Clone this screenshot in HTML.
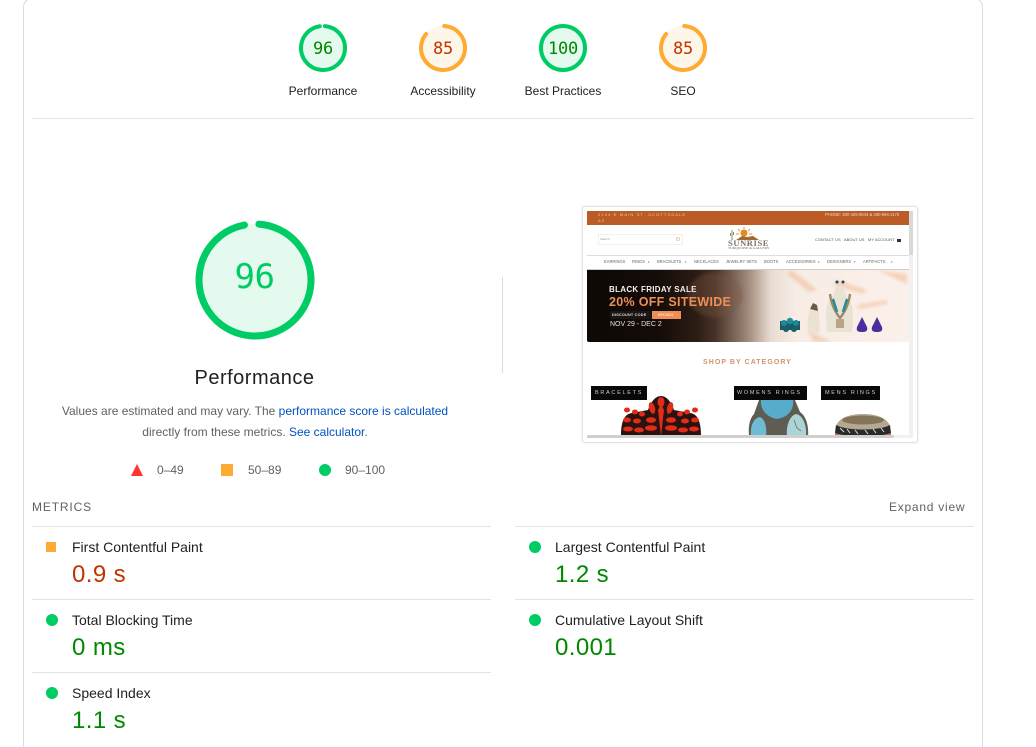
<!DOCTYPE html>
<html><head><meta charset="utf-8"><style>
html,body{margin:0;padding:0;background:#fff;width:1036px;height:747px;overflow:hidden}
body{position:relative;font-family:"Liberation Sans",Arial,sans-serif}
.a{position:absolute;white-space:nowrap}
.c{transform:translateX(-50%)}
.lab{font-size:12px;color:#212121;top:84px;line-height:15px}
.num{font-family:"DejaVu Sans Mono",monospace;font-size:17px;line-height:20px;top:39px;letter-spacing:-.2px}
.hr{position:absolute;height:1px;background:#e4e4e4}
.t{font-size:14px;color:#212121;line-height:16px}
.v{font-size:24px;line-height:28px;letter-spacing:.4px}
.g{color:#080}.o{color:#c33300}
.dot{position:absolute;width:12px;height:12px;border-radius:50%;background:#0c6}
.sq{position:absolute;width:10px;height:10px;background:#fa3}
.leg{font-size:12px;color:#616161;line-height:14px;top:463px}
svg{position:absolute;overflow:visible}
.n{position:absolute;top:52px;font-size:4.1px;line-height:6px;color:#666;filter:blur(.2px);white-space:nowrap}
.tl{position:absolute;top:30px;font-size:4px;line-height:6px;color:#555;filter:blur(.2px);white-space:nowrap}
.bl{position:absolute;top:180px;font-size:5.5px;line-height:12px;color:#ccc;letter-spacing:1.7px;white-space:nowrap}
</style></head><body>
<div class="a" style="left:23px;top:-2px;width:958px;height:800px;border:1px solid #dadce0;border-radius:9px"></div>

<svg style="left:299px;top:24px" width="48" height="48" viewBox="0 0 120 120"><circle cx="60" cy="60" r="56" fill="#0c6" fill-opacity=".1"/><circle cx="60" cy="60" r="55" fill="none" stroke="#0c6" stroke-width="10" stroke-linecap="round" stroke-dasharray="332 400" transform="rotate(-85 60 60)"/></svg>
<svg style="left:419px;top:24px" width="48" height="48" viewBox="0 0 120 120"><circle cx="60" cy="60" r="56" fill="#fa3" fill-opacity=".1"/><circle cx="60" cy="60" r="55" fill="none" stroke="#fa3" stroke-width="10" stroke-linecap="round" stroke-dasharray="294 400" transform="rotate(-87 60 60)"/></svg>
<svg style="left:539px;top:24px" width="48" height="48" viewBox="0 0 120 120"><circle cx="60" cy="60" r="55" fill="#0c6" fill-opacity=".1" stroke="#0c6" stroke-width="10"/></svg>
<svg style="left:659px;top:24px" width="48" height="48" viewBox="0 0 120 120"><circle cx="60" cy="60" r="56" fill="#fa3" fill-opacity=".1"/><circle cx="60" cy="60" r="55" fill="none" stroke="#fa3" stroke-width="10" stroke-linecap="round" stroke-dasharray="294 400" transform="rotate(-87 60 60)"/></svg>

<div class="a c num g" style="left:323px">96</div>
<div class="a c num o" style="left:443px">85</div>
<div class="a c num g" style="left:563px">100</div>
<div class="a c num o" style="left:683px">85</div>
<div class="a c lab" style="left:323px">Performance</div>
<div class="a c lab" style="left:443px">Accessibility</div>
<div class="a c lab" style="left:563px">Best Practices</div>
<div class="a c lab" style="left:683px">SEO</div>
<div class="hr" style="left:32px;top:118px;width:942px"></div>

<svg style="left:195px;top:220px" width="120" height="120" viewBox="0 0 120 120"><circle cx="60" cy="60" r="56" fill="#0c6" fill-opacity=".1"/><circle cx="60" cy="60" r="56" fill="none" stroke="#0c6" stroke-width="7" stroke-linecap="round" stroke-dasharray="337 400" transform="rotate(-86 60 60)"/></svg>
<div class="a c" style="left:254.5px;top:257px;font-family:'DejaVu Sans Mono',monospace;font-size:34px;line-height:40px;color:#0c6;letter-spacing:-.5px">96</div>
<div class="a c" style="left:254.5px;top:366px;font-size:20px;line-height:24px;color:#212121;letter-spacing:.5px">Performance</div>
<div class="a c" style="left:255px;top:404px;font-size:12px;line-height:15px;color:#616161">Values are estimated and may vary. The <span style="color:#0051c3">performance score is calculated</span></div>
<div class="a c" style="left:255px;top:425px;font-size:12px;line-height:15px;color:#616161">directly from these metrics. <span style="color:#0051c3">See calculator</span>.</div>

<svg style="left:131px;top:464px" width="12" height="12"><path d="M6 0L12 12H0Z" fill="#f33"/></svg>
<div class="a leg" style="left:157px">0–49</div>
<div class="a" style="left:221px;top:464px;width:12px;height:12px;background:#fa3"></div>
<div class="a leg" style="left:248px">50–89</div>
<div class="dot" style="left:319px;top:464px"></div>
<div class="a leg" style="left:345px">90–100</div>

<div style="position:absolute;left:502px;top:277px;width:1px;height:96px;background:#dcdcdc"></div>

<div style="position:absolute;left:582px;top:206px;width:334px;height:235px;border:1px solid #e2e2e2;border-radius:3px;box-shadow:0 0 2px rgba(0,0,0,.12);background:#fff;overflow:hidden">
 <div style="position:absolute;left:4px;top:4px;width:322px;height:14px;background:#bb5c26"></div>
 <div class="a" style="left:15px;top:5px;font-size:4px;line-height:5.5px;color:#e8c9b0;letter-spacing:1.15px;white-space:normal;width:90px;filter:blur(.25px)">2194 E MAIN ST, SCOTTSDALE AZ</div>
 <div class="a" style="left:242px;top:5px;font-size:4.2px;line-height:6px;color:#ecd6c4;filter:blur(.25px)">PHONE: 480-425-0644 &amp; 480-994-1170</div>
 <div style="position:absolute;left:326px;top:4px;width:4px;height:44px;background:#d8d8d8"></div>
 <div style="position:absolute;left:326px;top:48px;width:4px;height:184px;background:#f1f1f1"></div>
 <div style="position:absolute;left:15px;top:27px;width:83px;height:9px;border:1px solid #f0f0f0"></div>
 <div class="a" style="left:17px;top:29px;font-size:3px;line-height:6px;color:#999">Search</div>
 <div class="a" style="left:93px;top:30px;width:2px;height:2px;border:1px solid #f0cf90;border-radius:50%"></div>
 <svg style="left:145px;top:18px;filter:blur(.25px)" width="42" height="18"><circle cx="16" cy="8" r="3.5" fill="#e08a20"/><path d="M16 2v2M10 4l2 2M22 4l-2 2M8 9h3M21 9h3" stroke="#d07a20" stroke-width=".8"/><path d="M4 5v10M2.5 8v3M5.5 7v3" stroke="#85906a"/><path d="M8 15l6-4 5 1 6-1 6 4z" fill="#a06a30"/></svg>
 <div class="a" style="left:145px;top:32px;font-family:'Liberation Serif',serif;font-weight:700;font-size:8.5px;line-height:8px;letter-spacing:.6px;color:#7f7067;filter:blur(.25px)">SUNRISE</div>
 <div class="a" style="left:145px;top:39px;font-family:'Liberation Serif',serif;font-size:3.5px;line-height:5px;letter-spacing:.05px;color:#6d6058;filter:blur(.3px)">TURQUOISE &amp; GALLERY</div>
 <div class="tl" style="left:232px">CONTACT US</div>
 <div class="tl" style="left:261px">ABOUT US</div>
 <div class="tl" style="left:285px">MY ACCOUNT</div>
 <div class="a" style="left:314px;top:32px;width:4px;height:3px;background:#333"></div>
 <div style="position:absolute;left:4px;top:48px;width:322px;height:1px;background:#ddd"></div>
 <div class="n" style="left:21px">EARRINGS</div>
 <div class="n" style="left:49px">RINGS</div>
 <div class="n" style="left:65px;font-size:3px">▾</div>
 <div class="n" style="left:74px">BRACELETS</div>
 <div class="n" style="left:102px;font-size:3px">▾</div>
 <div class="n" style="left:111px">NECKLACES</div>
 <div class="n" style="left:143px">JEWELRY SETS</div>
 <div class="n" style="left:181px">BOOTS</div>
 <div class="n" style="left:203px">ACCESSORIES</div>
 <div class="n" style="left:235px;font-size:3px">▾</div>
 <div class="n" style="left:244px">DESIGNERS</div>
 <div class="n" style="left:271px;font-size:3px">▾</div>
 <div class="n" style="left:280px">ARTIFACTS</div>
 <div class="n" style="left:308px;font-size:3px">▾</div>
 <div style="position:absolute;left:4px;top:62px;width:322px;height:1px;background:#ccc"></div>

 <div style="position:absolute;left:4px;top:63px;width:322px;height:72px;background:linear-gradient(90deg,#0d0806 0%,#140c08 22%,#2c1c14 34%,#4a3328 40%,#a08a7c 50%,#e8dcd2 57%,#f7ede5 65%,#fbf1ea 100%);border-radius:0 0 2px 2px;overflow:hidden">
  <svg style="left:0;top:0;filter:blur(1.5px)" width="322" height="72"><ellipse cx="128" cy="25" rx="28" ry="22" fill="#7c5542" opacity=".35"/><path d="M205 0l25 20 -8 2 -22-18zM250 10l30 10 -4 4 -30-9zM270 35l30-5 0 4 -28 5zM220 60l25 12h-18zM290 0l30 14v-10z" fill="#f1b48e" opacity=".5"/></svg>
  <div class="a" style="left:22px;top:15px;font-size:8px;line-height:10px;font-weight:700;color:#f4f0ec;filter:blur(.2px);letter-spacing:.3px">BLACK FRIDAY SALE</div>
  <div class="a" style="left:22px;top:25px;font-size:12.5px;line-height:14px;font-weight:700;color:#ee8f57;filter:blur(.2px);letter-spacing:.3px">20% OFF SITEWIDE</div>
  <div class="a" style="left:23px;top:41px;height:8px;width:41px;background:#1c1613"></div>
  <div class="a" style="left:25px;top:41px;font-size:3.8px;line-height:8px;font-weight:700;color:#ddd;filter:blur(.2px);letter-spacing:.2px">DISCOUNT CODE</div>
  <div class="a" style="left:65px;top:41px;width:29px;height:8px;background:#ee8f57"></div>
  <div class="a" style="left:71px;top:41px;font-size:3.8px;line-height:8px;font-weight:700;color:#fbd9c2;filter:blur(.2px)">BFCM24</div>
  <div class="a" style="left:23px;top:50px;font-size:7px;line-height:10px;color:#e6e0da;filter:blur(.2px)">NOV 29 - DEC 2</div>
  <svg style="left:190px;top:7px;filter:blur(.35px)" width="125" height="60"><path d="M3 44h20v9H3z" fill="#1f5a60"/><circle cx="7" cy="46" r="3" fill="#1c8a96"/><circle cx="13" cy="44" r="3.2" fill="#19919e"/><circle cx="19" cy="46" r="3" fill="#1c8a96"/><circle cx="9" cy="52" r="3" fill="#17606a"/><circle cx="17" cy="52" r="3" fill="#17606a"/><path d="M31 56c-1-10 0-18 2-24 3-2 6-2 8 0 2 8 2 18 1 24z" fill="#ece2d2"/><path d="M33 32l3-6 4 2 1 6z" fill="#6a5a48"/><path d="M50 55c-1-12-2-22 1-29 3-6 6-8 7-14 1-4 8-4 9 0 1 6 4 8 7 14 3 7 2 17 1 29z" fill="#e9e3d6"/><circle cx="60" cy="5" r="1.5" fill="#245"/><circle cx="66" cy="5" r="1.5" fill="#245"/><path d="M53 17c1 9 5 18 10 24 5-6 9-15 10-24" fill="none" stroke="#9d8a68" stroke-width="2.5"/><path d="M56 22l4 13M70 22l-4 13" stroke="#2a8a98" stroke-width="2.5"/><path d="M59 42h8v9h-8z" fill="#b9a484"/><path d="M80 50l5-10 5 10c1 4-1 5-5 5s-6-1-5-5zM95 50l5-10 5 10c1 4-1 5-5 5s-6-1-5-5z" fill="#4b2e9e"/></svg>
 </div>

 <div class="a" style="left:120px;top:150px;font-size:7px;line-height:12px;font-weight:700;color:#d39270;letter-spacing:1.05px;filter:blur(.15px)">SHOP BY CATEGORY</div>
 <svg style="left:37px;top:189px;filter:blur(.3px)" width="82" height="40"><path d="M1 40C1 26 4 18 12 17L28 14C31 5 36 0 41 0s10 5 13 14L70 17c8 1 11 9 11 23z" fill="#2a1210"/><g fill="#e22c18"><path d="M41 40l-3-26 3-6 3 6z"/><ellipse cx="41" cy="6" rx="3.5" ry="5"/><ellipse cx="32" cy="12" rx="3" ry="6" transform="rotate(-15 32 12)"/><ellipse cx="50" cy="12" rx="3" ry="6" transform="rotate(15 50 12)"/><ellipse cx="31" cy="24" rx="5" ry="2.8"/><ellipse cx="51" cy="24" rx="5" ry="2.8"/><ellipse cx="31" cy="32" rx="6" ry="2.8"/><ellipse cx="51" cy="32" rx="6" ry="2.8"/><ellipse cx="7" cy="14" rx="3" ry="2.5"/><ellipse cx="15" cy="16" rx="3" ry="2.5"/><ellipse cx="22" cy="18" rx="3" ry="2.5"/><ellipse cx="60" cy="18" rx="3" ry="2.5"/><ellipse cx="67" cy="16" rx="3" ry="2.5"/><ellipse cx="75" cy="14" rx="3" ry="2.5"/><ellipse cx="7" cy="24" rx="4" ry="2.5"/><ellipse cx="17" cy="25" rx="4" ry="2.5"/><ellipse cx="65" cy="25" rx="4" ry="2.5"/><ellipse cx="75" cy="24" rx="4" ry="2.5"/><ellipse cx="8" cy="33" rx="5" ry="2.5"/><ellipse cx="19" cy="34" rx="5" ry="2.5"/><ellipse cx="63" cy="34" rx="5" ry="2.5"/><ellipse cx="74" cy="33" rx="5" ry="2.5"/></g></svg>
 <svg style="left:165px;top:193px;filter:blur(.3px)" width="62" height="36"><path d="M1 36c-1-10 1-18 5-22l5-14h36l5 12c6 4 9 14 8 24z" fill="#5f5c52"/><path d="M13 0h32c1 9-4 17-16 19C18 17 12 9 13 0z" fill="#58accb"/><path d="M3 36c-1-9 2-18 9-19 5 2 7 10 6 19z" fill="#6fbbd4"/><path d="M39 36c-1-9 2-20 9-22 7 1 11 12 10 22z" fill="#a9d5d9"/><path d="M46 20l3 8 4 3" stroke="#8a6a50" fill="none" stroke-width=".8"/></svg>
 <svg style="left:252px;top:207px;filter:blur(.3px)" width="56" height="22"><path d="M1 22V12C4 4 14 0 28 0s24 4 27 12v10z" fill="#b4a892"/><ellipse cx="28" cy="6" rx="21" ry="4.5" fill="#847559"/><path d="M1 11c10 6 44 6 54 0l1 8c-14 5-42 5-56 0z" fill="#2a2a2a"/><path d="M5 14l4 4M12 15l3 4M20 16l3 4M30 16l3 4M38 15l3 4M46 14l3 4" stroke="#ddd" stroke-width="1"/><path d="M0 19c14 5 42 5 56 0v3H0z" fill="#c06a5a"/></svg>
 <div style="position:absolute;left:8px;top:179px;width:56px;height:14px;background:#080808"></div>
 <div class="bl" style="left:12px">BRACELETS</div>
 <div style="position:absolute;left:151px;top:179px;width:73px;height:14px;background:#080808"></div>
 <div class="bl" style="left:154px">WOMENS RINGS</div>
 <div style="position:absolute;left:238px;top:179px;width:59px;height:14px;background:#080808"></div>
 <div class="bl" style="left:242px">MENS RINGS</div>
 <div style="position:absolute;left:4px;top:228px;width:326px;height:3px;background:#f1f1f1"></div>
 <div style="position:absolute;left:4px;top:228px;width:307px;height:3px;background:#cfcfcf;border-radius:2px"></div>
 <div style="position:absolute;left:4px;top:231px;width:326px;height:4px;background:#fff"></div>
</div>

<div class="a" style="left:32px;top:500px;font-size:12px;line-height:15px;color:#616161;letter-spacing:.85px">METRICS</div>
<div class="a" style="left:889px;top:500px;font-size:12px;line-height:15px;color:#616161;letter-spacing:.75px">Expand view</div>

<div class="hr" style="left:32px;top:526px;width:459px"></div>
<div class="hr" style="left:515px;top:526px;width:459px"></div>
<div class="hr" style="left:32px;top:599px;width:459px"></div>
<div class="hr" style="left:515px;top:599px;width:459px"></div>
<div class="hr" style="left:32px;top:672px;width:459px"></div>

<div class="sq" style="left:46px;top:542px"></div>
<div class="a t" style="left:72px;top:539px">First Contentful Paint</div>
<div class="a v o" style="left:72px;top:561px">0.9 s</div>
<div class="dot" style="left:46px;top:614px"></div>
<div class="a t" style="left:72px;top:612px">Total Blocking Time</div>
<div class="a v g" style="left:72px;top:634px">0 ms</div>
<div class="dot" style="left:46px;top:687px"></div>
<div class="a t" style="left:72px;top:685px">Speed Index</div>
<div class="a v g" style="left:72px;top:707px">1.1 s</div>
<div class="dot" style="left:529px;top:541px"></div>
<div class="a t" style="left:555px;top:539px">Largest Contentful Paint</div>
<div class="a v g" style="left:555px;top:561px">1.2 s</div>
<div class="dot" style="left:529px;top:614px"></div>
<div class="a t" style="left:555px;top:612px">Cumulative Layout Shift</div>
<div class="a v g" style="left:555px;top:634px">0.001</div>
</body></html>
